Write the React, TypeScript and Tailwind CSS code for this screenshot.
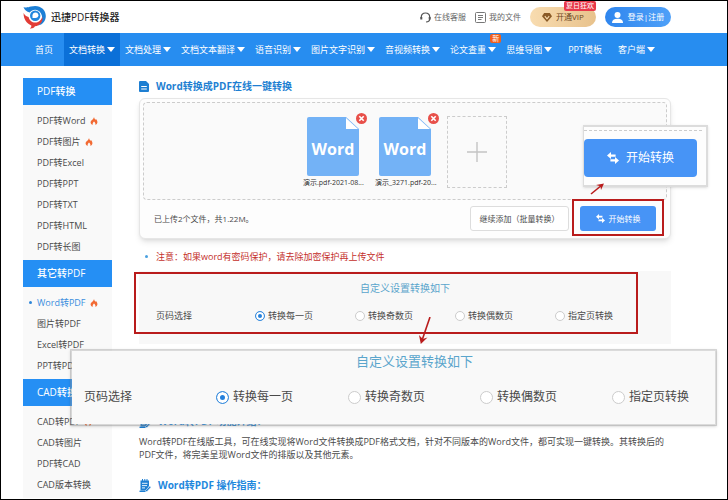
import React, { useState } from 'react';

const navItems = [
  { label: '首页' },
  { label: '文档转换', menu: true, active: true },
  { label: '文档处理', menu: true },
  { label: '文档文本翻译', menu: true },
  { label: '语音识别', menu: true },
  { label: '图片文字识别', menu: true },
  { label: '音视频转换', menu: true },
  { label: '论文查重', menu: true, badge: '新' },
  { label: '思维导图', menu: true },
  { label: 'PPT模板' },
  { label: '客户端', menu: true },
];

const sideGroups = [
  {
    label: 'PDF转换',
    items: [
      { label: 'PDF转Word', hot: true },
      { label: 'PDF转图片', hot: true },
      { label: 'PDF转Excel' },
      { label: 'PDF转PPT' },
      { label: 'PDF转TXT' },
      { label: 'PDF转HTML' },
      { label: 'PDF转长图' },
    ],
  },
  {
    label: '其它转PDF',
    items: [
      { label: 'Word转PDF', hot: true, active: true },
      { label: '图片转PDF' },
      { label: 'Excel转PDF' },
      { label: 'PPT转PDF' },
    ],
  },
  {
    label: 'CAD转换',
    items: [
      { label: 'CAD转PDF', hot: true },
      { label: 'CAD转图片' },
      { label: 'PDF转CAD' },
      { label: 'CAD版本转换' },
    ],
  },
];

const files = ['演示.pdf-2021-08...', '演示_3271.pdf-20...'];

const pageModes = ['转换每一页', '转换奇数页', '转换偶数页', '指定页转换'];

const Logo = () => (
  <svg className="w-6 h-6" viewBox="0 0 24 24" fill="none">
    <path d="M0.5 2C3 3 5 2.4 8 1.6C16 -0.8 22.8 4 22.8 11C22.8 16 19.5 19.6 15 20.6C19 17 20.3 12.5 18 8.4C15.4 4 9.6 3.6 6.8 7.6C3.6 6.8 1.4 5 0.5 2Z" fill="#1b7fd6" />
    <path d="M0.6 8C1.6 10.3 3.6 11.6 5.6 11.9C6.4 16.4 11 18.6 15 16.9C17.4 15.8 18.8 13.8 19.2 11.4C20.4 16.6 17 20.6 12 21.2C11 22.8 9 23.8 6.8 23.4C8 22.6 8.5 21.6 8.3 20.4C3.6 18.6 0.4 14 0.6 8Z" fill="#e23c36" />
    <circle cx="12.2" cy="10.8" r="5.2" fill="#2387dd" />
    <path d="M9.5 13.1V10.6C9.5 8.6 10.9 7.5 12.5 7.5C14.2 7.5 15.4 8.7 15.4 10.3C15.4 11.9 14.2 13.1 12.4 13.1Z" fill="#fff" />
  </svg>
);

const Flame = () => (
  <svg className="w-2 h-2" viewBox="0 0 8 8">
    <path d="M4 0C4.3 1.6 5 2.1 5.5 2.8C5.8 2.5 5.9 2.2 5.9 1.9C7 3 7.6 4.2 7.4 5.6C7.2 6.8 6.5 7.6 5.4 8C5.8 6.6 5.2 5.4 4 4.4C3 5.4 2.3 6.6 2.7 8C1.5 7.6 0.7 6.7 0.6 5.5C0.4 3.6 3.4 2.6 4 0Z" fill="#f26a33" />
  </svg>
);

const Swap = ({ className }: { className: string }) => (
  <svg className={className} viewBox="0 0 12 12" fill="currentColor">
    <path d="M0 3.5L4 0V2.4H8.6V4.7H4V7Z" />
    <path d="M12 8.5L8 5V7.3H3.4V9.6H8V12Z" />
  </svg>
);

const GuideIcon = () => (
  <svg className="w-3 h-[13px]" viewBox="0 0 12 13" fill="none">
    <path d="M1.5 1.5H10V7L7 11.5H1.5Z" fill="#1e7fd2" />
    <path d="M3.5 0V2.6M5.8 0V2.6M8 0V2.6" stroke="#1e7fd2" />
    <path d="M0.5 12.3H7" stroke="#1e7fd2" strokeWidth="1.4" />
    <path d="M3 4.3H8.5M3 6.6H8M3 8.9H6" stroke="#fff" strokeWidth="0.9" />
    <path d="M6.5 11.5L10.8 7L12 8.2L8 12.6H6.5Z" fill="#1e7fd2" stroke="#fff" strokeWidth="0.5" />
  </svg>
);

const WordFile = ({ name }: { name: string }) => (
  <li className="relative w-[60px] pt-px">
    <div className="relative mx-auto w-[52px] h-[59px]">
      <svg className="w-full h-full" viewBox="0 0 52 59">
        <path d="M2 0H39L52 12V57Q52 59 50 59H2Q0 59 0 57V2Q0 0 2 0Z" fill="#73b2f6" />
        <path d="M39 1V12H51Z" fill="#fff" />
      </svg>
      <span className="absolute inset-x-0 top-5 text-center text-base leading-6 font-bold text-white">Word</span>
      <button aria-label="删除" className="absolute -top-1 -right-2 w-[11px] h-[11px] rounded-full bg-[#e8504a]">
        <svg viewBox="0 0 11 11" stroke="#fff" strokeWidth="1.6">
          <path d="M3.3 3.3L7.7 7.7M7.7 3.3L3.3 7.7" />
        </svg>
      </button>
    </div>
    <p className="text-center text-[7px] leading-[14px] text-[#333] whitespace-nowrap">{name}</p>
  </li>
);

export const App: React.FC = () => {
  const [mode, setMode] = useState(pageModes[0]);

  return (
    <div className="min-h-screen border border-black bg-white text-[9px] text-[#4a4a4a] font-['Open_Sans','Noto_Sans_CJK_SC',sans-serif]">
      {/* Header */}
      <header className="flex items-center justify-between h-8 pl-[22px] pr-14">
        <a href="#" className="flex items-center gap-1 text-[10px] font-medium text-[#222]">
          <Logo />
          迅捷PDF转换器
        </a>
        <div className="flex items-center gap-[9px] text-[8px] text-[#666]">
          <a href="#" className="flex items-center gap-[3px]">
            <svg className="w-[11px] h-[11px]" viewBox="0 0 11 11" fill="none" stroke="#555" strokeWidth="1.2">
              <path d="M1.3 6.5V5C1.3 2.5 3 1 5.5 1S9.7 2.5 9.7 5V7C9.7 8.8 8.5 9.8 6 10" />
              <path d="M1.3 5V7.5M9.7 5V7.5" strokeWidth="2" />
            </svg>
            在线客服
          </a>
          <a href="#" className="flex items-center gap-[3px]">
            <svg className="w-[11px] h-[11px]" viewBox="0 0 11 11" fill="none" stroke="#777">
              <rect x="0.5" y="0.5" width="10" height="10" rx="1" />
              <path d="M3 3.5H8M3 5.5H8M3 7.5H6.5" />
            </svg>
            我的文件
          </a>
          <button className="relative flex items-center justify-center gap-1 w-[66px] h-5 rounded-full bg-gradient-to-r from-[#f8dcb0] to-[#e8c28c] text-[#6b451c]">
            <svg className="w-[10px] h-[9px]" viewBox="0 0 10 9" fill="none">
              <path d="M2.2 0H7.8L10 3.2L5 9L0 3.2Z" fill="#8a5a26" />
              <path d="M2.8 3.2L5 5.8L7.2 3.2" stroke="#f8dcb0" strokeWidth="1.1" />
            </svg>
            开通VIP
            <span className="absolute -top-[6px] right-0 px-[2px] rounded-[2px] bg-[#e8394a] text-[7px] leading-[10px] text-white whitespace-nowrap">夏日狂欢</span>
          </button>
          <button className="flex items-center justify-center gap-[5px] w-[66px] h-5 rounded-full bg-gradient-to-r from-[#2f86ee] to-[#4ea0f8] text-white whitespace-nowrap">
            <svg className="w-[11px] h-[11px]" viewBox="0 0 11 11" fill="#fff">
              <circle cx="5.5" cy="3" r="3" />
              <path d="M0 11C0 8 2 6.8 5.5 6.8S11 8 11 11Z" />
            </svg>
            登录|注册
          </button>
        </div>
      </header>

      {/* Navigation */}
      <nav className="flex h-[33px] pl-[23px] bg-[#278df0] text-white">
        {navItems.map(item => (
          <a
            key={item.label}
            href="#"
            className={`relative flex items-center gap-[2px] whitespace-nowrap ${item.menu ? 'px-[5px]' : 'px-[11px]'} ${item.active ? 'bg-[#0b70d8]' : ''}`}
          >
            {item.label}
            {item.menu && (
              <svg className="w-2 h-[5px]" viewBox="0 0 8 5" fill="#fff">
                <path d="M0 0H8L4 5Z" />
              </svg>
            )}
            {item.badge && (
              <span className="absolute top-px right-0 px-[2px] rounded-[2px] bg-[#f2601c] text-[7px] leading-[9px]">{item.badge}</span>
            )}
          </a>
        ))}
      </nav>

      <div className="flex gap-[27px] pl-[22px] pr-14 pt-3">
        {/* Sidebar */}
        <aside className="w-[89px] shrink-0 bg-[#f9f9f9]">
          {sideGroups.map(group => (
            <section key={group.label}>
              <h2 className="h-[27px] pl-[14px] bg-[#258ff4] text-[10px] leading-[27px] font-medium text-white">{group.label}</h2>
              <ul className="pt-[5px] pb-[3px]">
                {group.items.map(item => (
                  <li key={item.label} className="relative h-[21px] pl-[14px]">
                    {item.active && <span className="absolute left-[6px] top-[9px] w-[3px] h-[3px] rounded-full bg-[#2f86d8]" />}
                    <a href="#" className={`flex items-center gap-1 leading-[21px] ${item.active ? 'text-[#3b8ede]' : ''}`}>
                      {item.label}
                      {item.hot && <Flame />}
                    </a>
                  </li>
                ))}
              </ul>
            </section>
          ))}
        </aside>

        {/* Main Content */}
        <main className="flex-1 min-w-0">
          <h1 className="flex items-center gap-[7px] h-4 text-[10px] font-bold text-[#1e7fd2]">
            <svg className="w-[10px] h-[11px]" viewBox="0 0 10 11">
              <path d="M1 0H7L10 3V10Q10 11 9 11H1Q0 11 0 10V1Q0 0 1 0Z" fill="#1e7fd2" />
              <path d="M2.2 5.5H7.8M2.2 8H7.8" stroke="#fff" strokeWidth="1.1" />
            </svg>
            Word转换成PDF在线一键转换
          </h1>

          {/* Upload card */}
          <section className="relative mt-1 p-[3px] border border-[#e6e6e6] rounded-md bg-[#fdfdfd] shadow-md">
            <ul className="flex justify-center gap-3 pt-[13px] pb-[9px] border border-dashed border-[#ccc] rounded-sm bg-[#fafafa]">
              {files.map(name => (
                <WordFile key={name} name={name} />
              ))}
              <li>
                <button aria-label="添加文件" className="flex items-center justify-center w-[60px] h-[72px] border border-dashed border-[#ccc]">
                  <svg className="w-5 h-5" viewBox="0 0 20 20" stroke="#c4c4c4" strokeWidth="1.4">
                    <path d="M10 0V20M0 10H20" />
                  </svg>
                </button>
              </li>
            </ul>
            <div className="flex items-center px-[11px] pt-[6px] pb-1 text-[8px]">
              <p className="flex-1">已上传2个文件，共1.22M。</p>
              <button className="w-[99px] h-[25px] border border-[#ddd] rounded-[3px] bg-white whitespace-nowrap">继续添加（批量转换）</button>
              <div className="relative ml-[11px]">
                <button className="flex items-center justify-center gap-1 w-[76px] h-[25px] rounded-[3px] bg-[#4794f6] text-white">
                  <Swap className="w-[9px] h-[9px]" />
                  开始转换
                </button>
                <span className="absolute -inset-x-2 -top-[7px] -bottom-[5px] border-2 border-[#b91c1c] pointer-events-none" />
              </div>
            </div>

            {/* Enlarged start button */}
            <div className="absolute -right-[38px] top-[26px] w-[125px] pt-[3px] pb-2 border-2 border-l border-[#dcdcdc] bg-[#fdfdfd] shadow-sm">
              <div className="mr-1 border-t border-dashed border-[#ccc]" />
              <button className="flex items-center justify-center gap-[7px] w-[113px] h-[38px] mt-[8px] rounded-[4px] bg-[#4794f6] text-xs text-white">
                <Swap className="w-3 h-3" />
                开始转换
              </button>
            </div>
            <svg className="absolute right-16 top-[84px] w-4 h-3" viewBox="0 0 16 12" fill="none" stroke="#b91c1c" strokeWidth="1.6">
              <path d="M1 11L12 2" />
              <path d="M6 2L14 0.5L11 7L10.5 3.3Z" fill="#b91c1c" stroke="none" />
            </svg>
          </section>

          <p className="flex items-center mt-[10px] pl-[6px] gap-2 leading-[15px] text-[#c4302b]">
            <span className="w-[3px] h-[3px] rounded-full bg-[#4aa0e0]" />
            注意：如果word有密码保护，请去除加密保护再上传文件
          </p>

          {/* Page options */}
          <section className="relative mt-[7px] pt-[10px] pb-[21px] bg-[#f8f8f8]">
            <h3 className="text-center text-[10px] leading-[15px] text-[#5aa5cc]">自定义设置转换如下</h3>
            <div className="flex items-center mt-3 pl-[17px] pr-[58px] leading-[15px]">
              <span className="w-[99px]">页码选择</span>
              <div className="flex flex-1 justify-between">
                {pageModes.map(item => (
                  <label key={item} className="flex items-center gap-[3px]">
                    <input
                      type="radio"
                      name="mode"
                      checked={mode === item}
                      onChange={() => setMode(item)}
                      className="appearance-none w-[10px] h-[10px] rounded-full border border-[#ccc] bg-white checked:border-[#3b8ede] checked:bg-[#2480dc] checked:shadow-[inset_0_0_0_2px_white]"
                    />
                    {item}
                  </label>
                ))}
              </div>
            </div>
            <span className="absolute -left-[5px] right-[33px] top-px bottom-[10px] border-2 border-[#b91c1c] pointer-events-none" />

            {/* Enlarged page options */}
            <div className="absolute z-10 -left-[69px] -right-[46px] top-[78px] pb-[17px] border-2 border-[#999]/35 bg-[#f9f9f9] bg-clip-padding text-xs leading-5 shadow-sm">
              <h3 className="pl-[42px] text-center text-[13px] leading-5 text-[#5aa5cc]">自定义设置转换如下</h3>
              <div className="flex items-center mt-4 pl-3 pr-[26px]">
                <span className="w-[132px]">页码选择</span>
                <div className="flex flex-1 justify-between">
                  {pageModes.map(item => (
                    <label key={item} className="flex items-center gap-1">
                      <input
                        type="radio"
                        name="mode-large"
                        checked={mode === item}
                        onChange={() => setMode(item)}
                        className="appearance-none w-[13px] h-[13px] rounded-full border border-[#ccc] bg-white checked:border-[#3b8ede] checked:bg-[#2480dc] checked:shadow-[inset_0_0_0_3px_white]"
                      />
                      {item}
                    </label>
                  ))}
                </div>
              </div>
            </div>
            <svg className="absolute z-20 right-[240px] top-[46px] w-3 h-7" viewBox="0 0 12 28" fill="none" stroke="#b91c1c" strokeWidth="1.6">
              <path d="M11 0L3.5 22" />
              <path d="M0 18L1.8 27L8.5 20.5L3.8 22Z" fill="#b91c1c" stroke="none" />
            </svg>
          </section>

          {/* Description */}
          <h2 className="flex items-center gap-[7px] h-4 mt-[69px] text-[10px] font-bold text-[#1e88dd]">
            <GuideIcon />
            Word转PDF 功能介绍：
          </h2>
          <p className="mt-[6px] leading-[13px]">
            Word转PDF在线版工具，可在线实现将Word文件转换成PDF格式文档，针对不同版本的Word文件，都可实现一键转换。其转换后的PDF文件，将完美呈现Word文件的排版以及其他元素。
          </p>
          <h2 className="flex items-center gap-[7px] h-4 mt-4 text-[10px] font-bold text-[#1e88dd]">
            <GuideIcon />
            Word转PDF 操作指南：
          </h2>
        </main>
      </div>
    </div>
  );
};

export default App;
